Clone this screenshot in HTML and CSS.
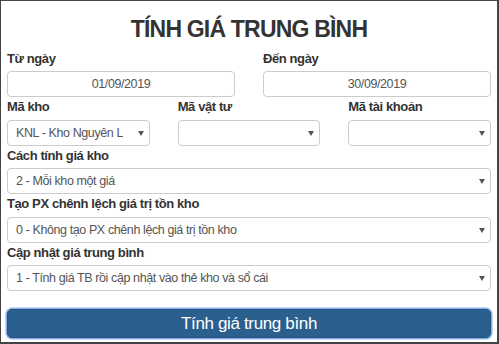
FILE: index.html
```html
<!DOCTYPE html>
<html lang="vi">
<head>
    <meta charset="UTF-8" />
    <meta name="viewport" content="width=device-width, initial-scale=1.0"/>
    <title>Tính giá trung bình</title>
    <link rel="stylesheet" href="styles.css">
</head>
<body>

    <div class="frame">
        <h1 class="title">TÍNH GIÁ TRUNG BÌNH</h1>

        <!-- Khoảng thời gian -->
        <div class="row cols-2">
            <div class="field">
                <label>Từ ngày</label>
                <input class="control date" type="text" value="01/09/2019">
            </div>
            <div class="field">
                <label>Đến ngày</label>
                <input class="control date" type="text" value="30/09/2019">
            </div>
        </div>

        <!-- Bộ lọc -->
        <div class="row cols-3">
            <div class="field">
                <label>Mã kho</label>
                <div class="select-wrap">
                    <select class="control">
                        <option>KNL - Kho Nguyên Liệu</option>
                    </select>
                </div>
            </div>
            <div class="field">
                <label>Mã vật tư</label>
                <div class="select-wrap">
                    <select class="control"><option></option></select>
                </div>
            </div>
            <div class="field">
                <label>Mã tài khoản</label>
                <div class="select-wrap">
                    <select class="control"><option></option></select>
                </div>
            </div>
        </div>

        <div class="field">
            <label>Cách tính giá kho</label>
            <div class="select-wrap">
                <select class="control">
                    <option>2 - Mỗi kho một giá</option>
                </select>
            </div>
        </div>

        <div class="field">
            <label>Tạo PX chênh lệch giá trị tồn kho</label>
            <div class="select-wrap">
                <select class="control">
                    <option>0 - Không tạo PX chênh lệch giá trị tồn kho</option>
                </select>
            </div>
        </div>

        <div class="field">
            <label>Cập nhật giá trung bình</label>
            <div class="select-wrap">
                <select class="control">
                    <option>1 - Tính giá TB rồi cập nhật vào thẻ kho và sổ cái</option>
                </select>
            </div>
        </div>

        <button class="submit">Tính giá trung bình</button>
    </div>

</body>
</html>
```

FILE: styles.css
```css
/* Màu chủ đạo */
:root {
    --text: #333;
    --control-text: #555;
    --border: #ccc;
    --primary: #2b5f8e;
    --focus: #8ab2ea;
}

* {
    box-sizing: border-box;
}

body {
    margin: 0;
    font-family: "Liberation Sans", Arial, sans-serif;
    color: var(--text);
    background: #fff;
}

/* Khung ngoài */
.frame {
    width: 499px;
    height: 344px;
    border: 1px solid #444;
    border-right-width: 2px;
    border-bottom-width: 2px;
    padding: 14px 6px 0 6px;
}

.title {
    margin: 0 0 5.5px;
    font-size: 23px;
    line-height: 28px;
    font-weight: bold;
    letter-spacing: -0.8px;
    text-align: center;
}

/* Lưới các cột */
.row {
    display: grid;
    column-gap: 28px;
}

.cols-2 {
    grid-template-columns: repeat(2, 1fr);
}

.cols-3 {
    grid-template-columns: repeat(3, 1fr);
}

.field label {
    display: block;
    font-size: 13px;
    font-weight: bold;
    line-height: 20px;
    letter-spacing: -0.4px;
    margin-bottom: 2.5px;
}

/* Ô nhập và ô chọn */
.control {
    display: block;
    width: 100%;
    height: 26px;
    margin: 0;
    padding: 0 8px;
    font-family: inherit;
    font-size: 12.5px;
    letter-spacing: -0.4px;
    color: var(--control-text);
    background: #fff;
    border: 1px solid var(--border);
    border-radius: 4px;
    outline: none;
}

.date {
    text-align: center;
}

.select-wrap {
    position: relative;
}

.select-wrap select {
    appearance: none;
    -webkit-appearance: none;
    padding-right: 26px;
}

/* Mũi tên của ô chọn */
.select-wrap::after {
    content: "";
    position: absolute;
    right: 6px;
    top: 50%;
    margin-top: -2px;
    border-left: 3px solid transparent;
    border-right: 3px solid transparent;
    border-top: 5px solid #555;
    pointer-events: none;
}

/* Nút chính */
.submit {
    display: block;
    width: 100%;
    height: 29px;
    margin-top: 18px;
    font-family: inherit;
    font-size: 17px;
    letter-spacing: -0.35px;
    color: #fff;
    background: var(--primary);
    border: 1px solid #24527c;
    border-radius: 5px;
    box-shadow: 0 0 0 1.5px var(--focus);
    cursor: pointer;
}
```
